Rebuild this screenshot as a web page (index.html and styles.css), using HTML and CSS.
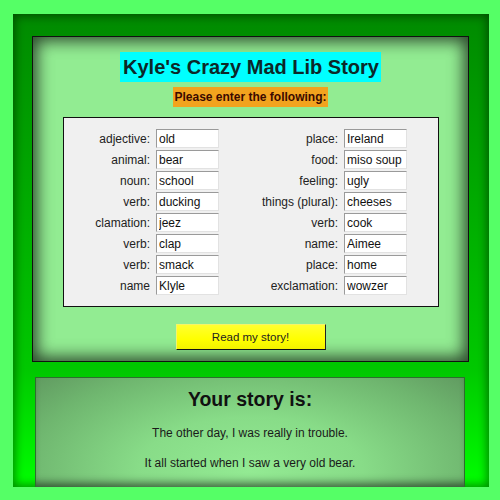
FILE: index.html
```html
<!DOCTYPE html>
<html lang="en">
<head>
<meta charset="utf-8">
<title>Kyle's Crazy Mad Lib Story</title>
<link rel="stylesheet" href="styles.css">
</head>
<body>
<div class="frame">
  <section class="form-panel">
    <h1 class="title">Kyle's Crazy Mad Lib Story</h1>
    <p class="subtitle">Please enter the following:</p>
    <div class="fields">
      <label class="lbl">adjective:</label><input class="fld" type="text" value="old">
      <label class="lbl">place:</label><input class="fld" type="text" value="Ireland">
      <label class="lbl">animal:</label><input class="fld" type="text" value="bear">
      <label class="lbl">food:</label><input class="fld" type="text" value="miso soup">
      <label class="lbl">noun:</label><input class="fld" type="text" value="school">
      <label class="lbl">feeling:</label><input class="fld" type="text" value="ugly">
      <label class="lbl">verb:</label><input class="fld" type="text" value="ducking">
      <label class="lbl">things (plural):</label><input class="fld" type="text" value="cheeses">
      <label class="lbl">clamation:</label><input class="fld" type="text" value="jeez">
      <label class="lbl">verb:</label><input class="fld" type="text" value="cook">
      <label class="lbl">verb:</label><input class="fld" type="text" value="clap">
      <label class="lbl">name:</label><input class="fld" type="text" value="Aimee">
      <label class="lbl">verb:</label><input class="fld" type="text" value="smack">
      <label class="lbl">place:</label><input class="fld" type="text" value="home">
      <label class="lbl">name</label><input class="fld" type="text" value="Klyle">
      <label class="lbl">exclamation:</label><input class="fld" type="text" value="wowzer">
    </div>
    <button class="read-btn" type="button">Read my story!</button>
  </section>
  <section class="story-panel">
    <h2 class="story-title">Your story is:</h2>
    <p class="story-line first">The other day, I was really in trouble.</p>
    <p class="story-line">It all started when I saw a very old bear.</p>
  </section>
</div>
</body>
</html>
```
FILE: styles.css
```css
html, body {
  margin: 0;
  padding: 0;
  background: #55ff66;
}

body {
  font-family: "Liberation Sans", Arial, sans-serif;
  color: #111;
}

.frame {
  box-sizing: border-box;
  width: 476px;
  height: 473px;
  margin: 14px 0 0 13px;
  padding: 22px 20px 0 19px;
  overflow: hidden;
  background: linear-gradient(#008a00, #00c800 75%, #00ff00);
  box-shadow: inset 0 0 10px 2px rgba(0, 0, 0, 0.45);
}

.form-panel {
  box-sizing: border-box;
  width: 437px;
  border: 1px solid #111;
  background: #92ec92;
  box-shadow: inset 0 0 16px 4px rgba(0, 0, 0, 0.7);
  padding: 0 0 11px;
  display: flex;
  flex-direction: column;
  align-items: center;
}

.title {
  margin: 15px 0 0;
  padding: 0 2px 0 3px;
  background: #00ffff;
  color: #0c2828;
  font: bold 20px/30px "Liberation Sans", Arial, sans-serif;
}

.subtitle {
  margin: 5px 0 0;
  padding: 0 1px;
  background: #f2a31e;
  color: #3a0a00;
  font: bold 12px/20px "Liberation Sans", Arial, sans-serif;
}

.fields {
  box-sizing: border-box;
  width: 376px;
  margin-top: 10px;
  padding: 11px 0;
  border: 1px solid #111;
  background: #f0f0f0;
  display: grid;
  grid-template-columns: 56px 63px 113px 63px;
  column-gap: 6px;
  row-gap: 2px;
  justify-content: center;
  align-items: center;
}

.lbl {
  text-align: right;
  font-size: 12px;
  color: #222;
  white-space: nowrap;
}

.fld {
  box-sizing: border-box;
  width: 63px;
  height: 19px;
  margin: 0;
  padding: 0 2px;
  border: 1px solid;
  border-color: #9a9a9a #e2e2e2 #e2e2e2 #9a9a9a;
  background: #fff;
  font: 12px "Liberation Sans", Arial, sans-serif;
  color: #111;
}

.read-btn {
  box-sizing: border-box;
  width: 150px;
  height: 26px;
  margin-top: 17px;
  padding: 0;
  border: 1px solid;
  border-color: #f4f46a #222 #111 #f4f46a;
  background: linear-gradient(#ffff30, #ffff00 60%, #f2f200);
  color: #222;
  font: 11.5px "Liberation Sans", Arial, sans-serif;
}

.story-panel {
  box-sizing: border-box;
  width: 430px;
  height: 110px;
  margin: 15px 0 0 3px;
  border: 1px solid #2d6e2d;
  border-bottom: 0;
  background: radial-gradient(ellipse 75% 140% at 50% 85%, #93ea93 0%, #88dc88 35%, #6fb66f 70%, #5a8e5a 100%);
  box-shadow: inset 0 -9px 8px -5px rgba(0, 0, 0, 0.55);
  text-align: center;
}

.story-title {
  margin: 9px 0 0;
  font: bold 19.5px/24px "Liberation Sans", Arial, sans-serif;
  color: #111;
}

.story-line {
  margin: 16px 0 0;
  font: 12px/14px "Liberation Sans", Arial, sans-serif;
  color: #1a1a1a;
}

.story-line.first {
  margin-top: 15px;
}
```
